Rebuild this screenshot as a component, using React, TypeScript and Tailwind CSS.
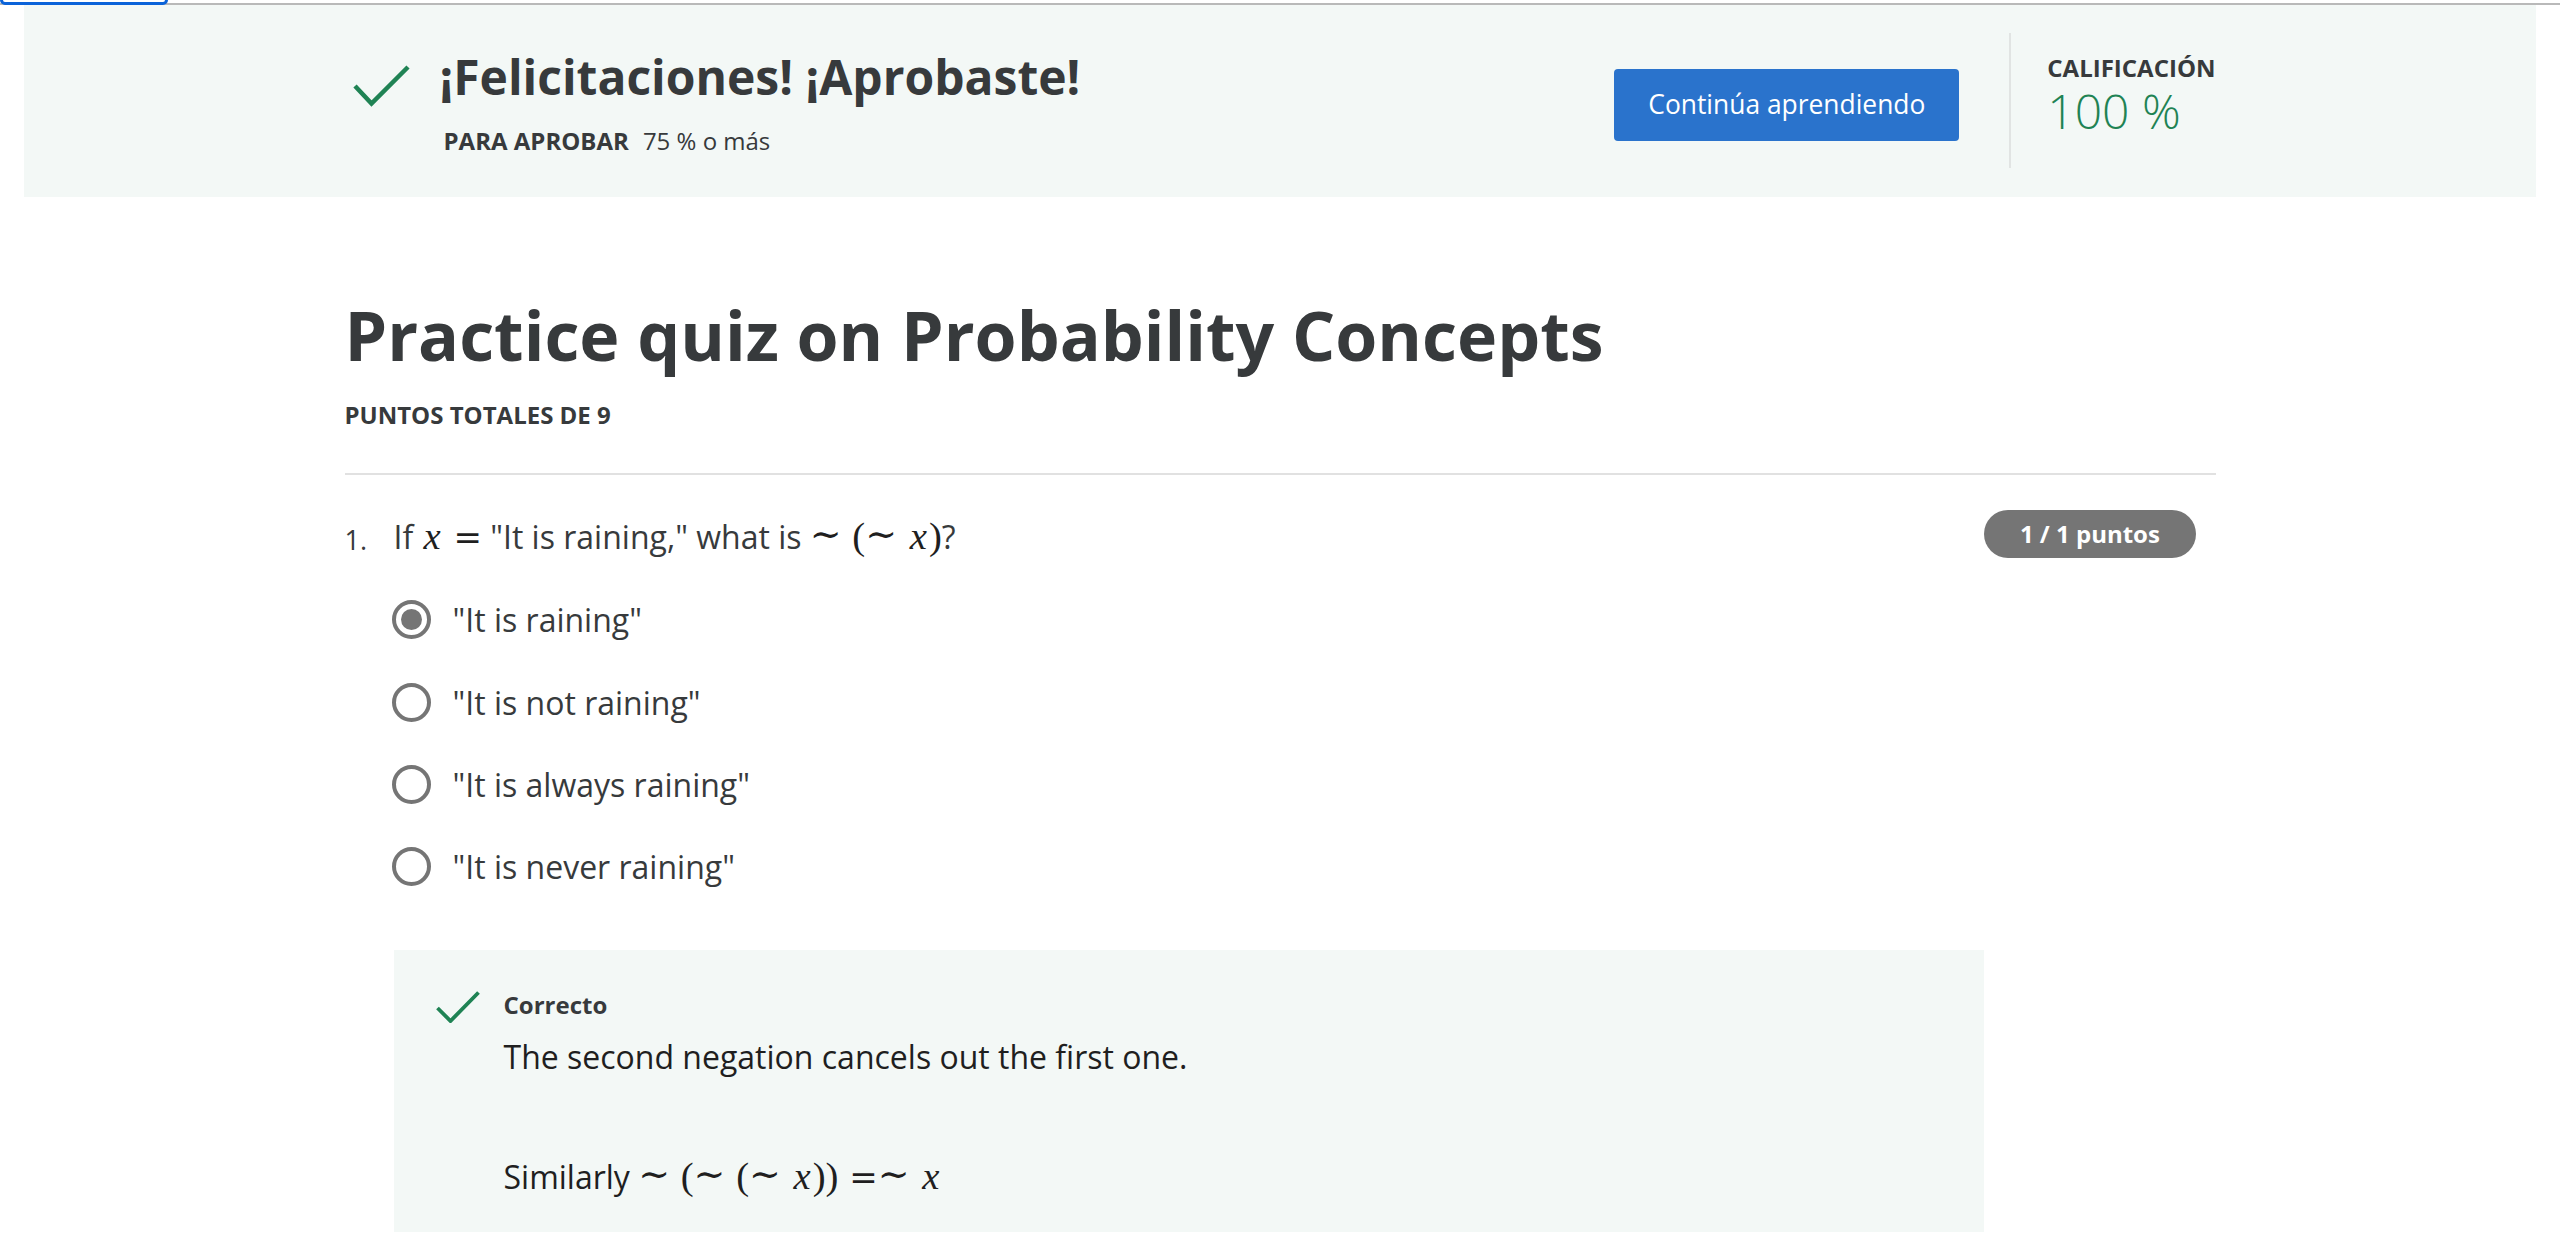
import React from "react";

function Check({ w, h, points, sw }: { w: number; h: number; points: string; sw: number }) {
  return (
    <svg width={w} height={h} viewBox={`0 0 ${w} ${h}`} fill="none" className="shrink-0">
      <polyline points={points} stroke="#1f8354" strokeWidth={sw} strokeLinecap="butt" strokeLinejoin="miter" />
    </svg>
  );
}

function M({ children }: { children: React.ReactNode }) {
  return (
    <span className="font-['Liberation_Serif','DejaVu_Serif',serif] text-[38.7px] leading-[0] text-[#1f1f1f]">
      {children}
    </span>
  );
}

function X() {
  return <span className="italic px-[2px]">x</span>;
}

function Sim() {
  return <span className="font-['DejaVu_Serif',serif] text-[38px] relative top-[-2px]">∼</span>;
}

function Eq() {
  return <span className="font-['DejaVu_Serif',serif] text-[34px] ml-[10.7px]">=</span>;
}

function Radio({ checked }: { checked?: boolean }) {
  return (
    <div className="ml-[-2px] w-[39px] h-[39px] shrink-0 rounded-full border-[4px] border-[#757575] flex items-center justify-center">
      {checked && <div className="w-[21px] h-[21px] rounded-full bg-[#757575]" />}
    </div>
  );
}

const options = [
  { t: '"It is raining"', c: true },
  { t: '"It is not raining"' },
  { t: '"It is always raining"' },
  { t: '"It is never raining"' },
];

export default function App() {
  return (
    <div className="min-h-screen bg-white font-['Open_Sans',sans-serif] text-[#373a3c]">
      {/* top strip */}
      <div className="relative h-[5px]">
        <div className="absolute left-0 right-0 top-[3px] h-[2px] bg-[#b9b9b9]" />
        <div className="absolute left-0 top-[-5px] w-[168px] h-[10px] border-[3px] border-[#0b63d9] rounded-[5px] bg-white" />
      </div>

      {/* banner */}
      <div className="mx-[24px] h-[192px] bg-[#f3f8f6]">
        <div className="w-[1871px] mx-auto h-full flex">
          <div className="flex-1 pt-[44px] pl-[8px]">
            <div className="flex items-start">
              <div className="mt-[15px]">
                <Check w={58} h={44} points="2,22 18.5,39.5 55,3" sw={4.5} />
              </div>
              <h2 className="ml-[29px] text-[48px] leading-[56px] font-bold">¡Felicitaciones! ¡Aprobaste!</h2>
            </div>
            <div className="mt-[17px] pl-[91px] text-[24px] leading-[32px] flex">
              <span className="font-bold">PARA APROBAR</span>
              <span className="ml-[14px]">75 % o más</span>
            </div>
          </div>
          <div className="flex items-start">
            <button className="mt-[64px] h-[72px] w-[345px] rounded-[4px] bg-[#2a73cc] text-white text-[26.4px]">
              Continúa aprendiendo
            </button>
            <div className="ml-[50px] mt-[28px] h-[135px] w-[2px] bg-[#e1e4e3]" />
            <div className="ml-[36px] pt-[51px]">
              <div className="text-[24px] leading-[24px] font-bold">CALIFICACIÓN</div>
              <div className="mt-[6.7px] text-[48px] leading-[48px] font-light text-[#1f8354]">100 %</div>
            </div>
          </div>
        </div>
      </div>

      {/* main */}
      <div className="w-[1871px] mx-auto">
        <h1 className="mt-[96px] text-[68px] leading-[84px] font-bold">Practice quiz on Probability Concepts</h1>
        <p className="mt-[22.4px] text-[24px] leading-[32px] font-bold">PUNTOS TOTALES DE 9</p>
        <div className="mt-[41.3px] h-[2px] bg-[#e1e1e1]" />

        <div className="mt-[40px] flex items-start">
          <div className="w-[49px] shrink-0 pt-[3px] text-[27px] leading-[44px]">1.</div>
          <div className="flex-1">
            <p className="text-[32px] leading-[44px] h-[44px] whitespace-nowrap">
              If{" "}
              <M>
                <X />
                <Eq />
              </M>{" "}
              "It is raining," what is{" "}
              <M>
                <Sim />
                <span className="ml-[10.7px]">(</span>
                <Sim />
                <span className="ml-[10.7px]">
                  <X />
                </span>
                )
              </M>
              ?
            </p>

            <div className="mt-[20px]">
              {options.map((o) => (
                <div key={o.t} className="h-[82.3px] flex items-center">
                  <Radio checked={o.c} />
                  <span className="ml-[22px] mt-[1px] text-[32px] leading-[44px]">{o.t}</span>
                </div>
              ))}
            </div>

            <div className="mt-[42px] bg-[#f3f8f6] pl-[42px] pt-[38.7px] pb-[33px] flex items-start">
              <div className="mt-[2px]">
                <Check w={44} h={32} points="1.5,17 14.5,30 42.5,1.5" sw={3.8} />
              </div>
              <div className="ml-[24px]">
                <div className="text-[24px] leading-[32px] font-bold">Correcto</div>
                <p className="mt-[14px] text-[32px] leading-[44px] text-[#1f1f1f]">
                  The second negation cancels out the first one.
                </p>
                <p className="mt-[76px] text-[32px] leading-[44px] h-[44px] whitespace-nowrap text-[#1f1f1f]">
                  Similarly{" "}
                  <M>
                    <Sim />
                    <span className="ml-[10.7px]">(</span>
                    <Sim />
                    <span className="ml-[10.7px]">(</span>
                    <Sim />
                    <span className="ml-[10.7px]">
                      <X />
                    </span>
                    ))
                    <Eq />
                    <Sim />
                    <span className="ml-[10.7px]">
                      <X />
                    </span>
                  </M>
                </p>
              </div>
            </div>
          </div>
          <div className="mt-[-5px] mr-[19.6px] w-[212px] h-[48px] shrink-0 rounded-full bg-[#757575] text-white font-bold text-[24px] flex items-center justify-center">
            1 / 1 puntos
          </div>
        </div>
      </div>
    </div>
  );
}
